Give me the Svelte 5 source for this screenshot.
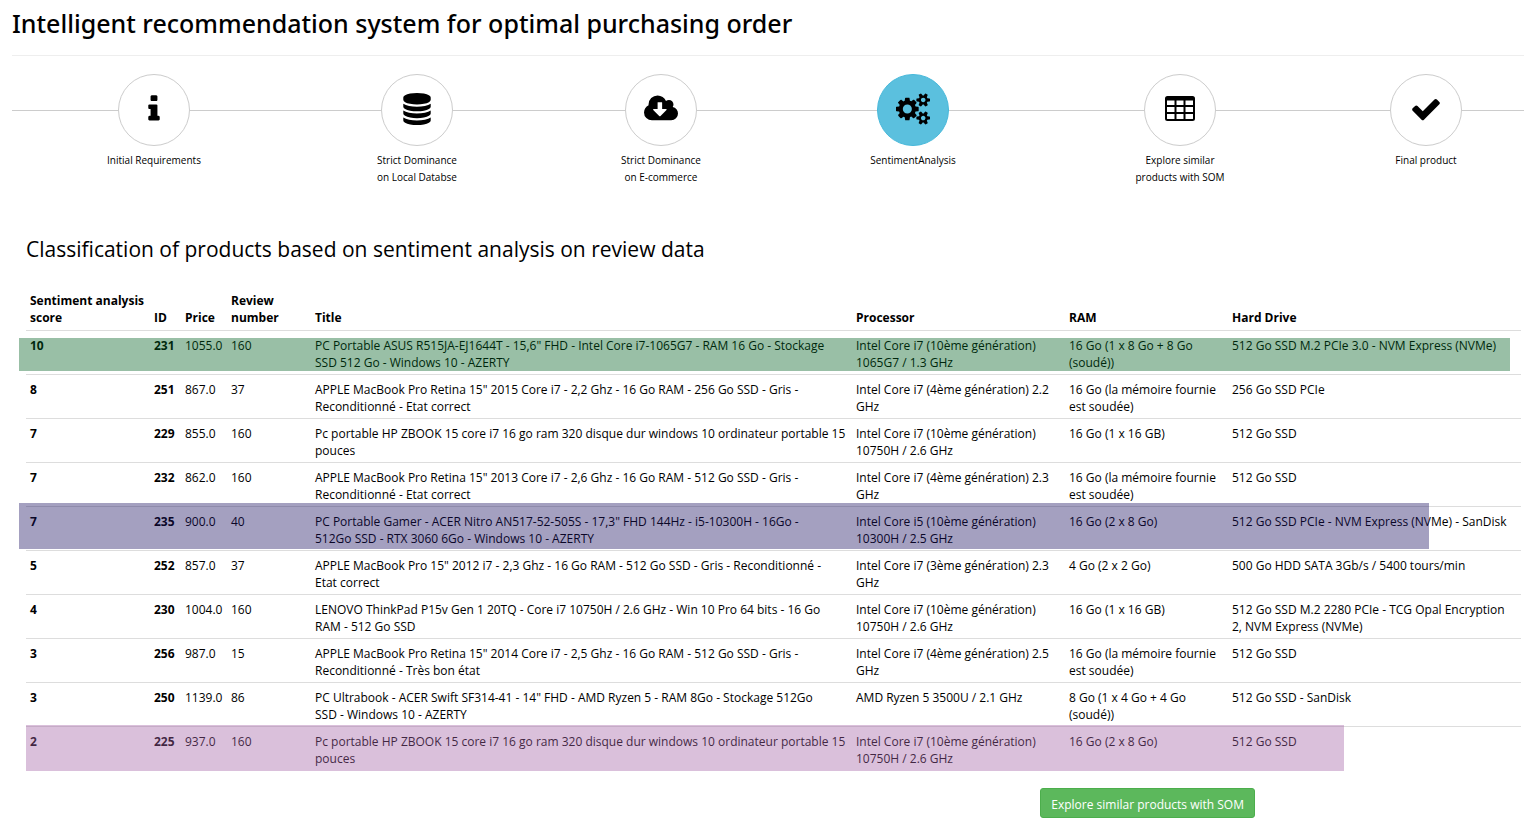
<script>
  const steps = [
    {
      label: 'Initial Requirements',
      box: '0 0 1792 1792',
      width: 32,
      path: 'M1216 1344v128q0 26-19 45t-45 19h-512q-26 0-45-19t-19-45v-128q0-26 19-45t45-19h64v-384h-64q-26 0-45-19t-19-45v-128q0-26 19-45t45-19h384q26 0 45 19t19 45v576h64q26 0 45 19t19 45zm-128-1152v192q0 26-19 45t-45 19h-256q-26 0-45-19t-19-45v-192q0-26 19-45t45-19h256q26 0 45 19t19 45z'
    },
    {
      label: 'Strict Dominance\non Local Databse',
      box: '0 0 1792 1792',
      width: 32,
      path: 'M896 768q237 0 443-43t325-127v170q0 69-103 128t-280 93.5-385 34.5-385-34.5-280-93.5-103-128v-170q119 84 325 127t443 43zm0 768q237 0 443-43t325-127v170q0 69-103 128t-280 93.5-385 34.5-385-34.5-280-93.5-103-128v-170q119 84 325 127t443 43zm0-384q237 0 443-43t325-127v170q0 69-103 128t-280 93.5-385 34.5-385-34.5-280-93.5-103-128v-170q119 84 325 127t443 43zm0-1152q208 0 385 34.5t280 93.5 103 128v128q0 69-103 128t-280 93.5-385 34.5-385-34.5-280-93.5-103-128v-128q0-69 103-128t280-93.5 385-34.5z'
    },
    {
      label: 'Strict Dominance\non E-commerce',
      box: '64 0 1920 1792',
      width: 34,
      path: 'M1344 928q0-14-9-23t-23-9h-224v-352q0-13-9.5-22.5t-22.5-9.5h-192q-13 0-22.5 9.5t-9.5 22.5v352h-224q-13 0-22.5 9.5t-9.5 22.5q0 14 9 23l352 352q9 9 23 9t23-9l351-351q10-12 10-24zm640 224q0 159-112.5 271.5t-271.5 112.5h-1088q-185 0-316.5-131.5t-131.5-316.5q0-130 70-240t188-165q-2-30-2-43 0-212 150-362t362-150q156 0 285.5 87t188.5 231q71-62 166-62 106 0 181 75t75 181q0 76-41 138 130 31 213.5 135.5t83.5 238.5z'
    },
    {
      label: 'SentimentAnalysis',
      active: true,
      box: '0 0 1920 1792',
      width: 34,
      path: 'M896 896q0-106-75-181t-181-75-181 75-75 181 75 181 181 75 181-75 75-181zm768 512q0-52-38-90t-90-38-90 38-38 90q0 53 37.5 90.5t90.5 37.5 90.5-37.5 37.5-90.5zm0-1024q0-52-38-90t-90-38-90 38-38 90q0 53 37.5 90.5t90.5 37.5 90.5-37.5 37.5-90.5zm-384 421v185q0 10-7 19.5t-16 10.5l-155 24q-11 35-32 76 34 48 90 115 7 11 7 20 0 12-7 19-23 30-82.5 89.5t-78.5 59.5q-11 0-21-7l-115-90q-37 19-77 31-11 108-23 155-7 24-30 24h-186q-11 0-20-7.5t-10-17.5l-23-153q-34-10-75-31l-118 89q-7 7-20 7-11 0-21-8-144-133-144-160 0-9 7-19 10-14 41-53t47-61q-23-44-35-82l-152-24q-10-1-17-9.5t-7-19.5v-185q0-10 7-19.5t16-10.5l155-24q11-35 32-76-34-48-90-115-7-11-7-20 0-12 7-20 22-30 82-89t79-59q11 0 21 7l115 90q34-18 77-32 11-108 23-154 7-24 30-24h186q11 0 20 7.5t10 17.5l23 153q34 10 75 31l118-89q8-7 20-7 11 0 21 8 144 133 144 160 0 8-7 19-12 16-42 54t-45 60q23 48 34 82l152 23q10 2 17 10.5t7 19.5zm640 533v140q0 16-149 31-12 27-30 52 51 113 51 138 0 4-4 7-122 71-124 71-8 0-46-47t-52-68q-20 2-30 2t-30-2q-14 21-52 68t-46 47q-2 0-124-71-4-3-4-7 0-25 51-138-18-25-30-52-149-15-149-31v-140q0-16 149-31 13-29 30-52-51-113-51-138 0-4 4-7 4-2 35-20t59-34 30-16q8 0 46 46.5t52 67.5q20-2 30-2t30 2q51-71 92-112l6-2q4 0 124 70 4 3 4 7 0 25-51 138 17 23 30 52 149 15 149 31zm0-1024v140q0 16-149 31-12 27-30 52 51 113 51 138 0 4-4 7-122 71-124 71-8 0-46-47t-52-68q-20 2-30 2t-30-2q-14 21-52 68t-46 47q-2 0-124-71-4-3-4-7 0-25 51-138-18-25-30-52-149-15-149-31v-140q0-16 149-31 13-29 30-52-51-113-51-138 0-4 4-7 4-2 35-20t59-34 30-16q8 0 46 46.5t52 67.5q20-2 30-2t30 2q51-71 92-112l6-2q4 0 124 70 4 3 4 7 0 25-51 138 17 23 30 52 149 15 149 31z'
    },
    {
      label: 'Explore similar\nproducts with SOM',
      box: '0 0 32 32',
      width: 32,
      path: 'M3.5 3h25q2.5 0 2.5 2.5v20q0 2.5-2.5 2.5h-25q-2.5 0-2.5-2.5v-20q0-2.5 2.5-2.5zM3 7.5v4.5h7.5v-4.5zM12.5 7.5v4.5h7v-4.5zM21.5 7.5v4.5h7.5v-4.5zM3 14v5h7.5v-5zM12.5 14v5h7v-5zM21.5 14v5h7.5v-5zM3 21v4.5q0 .5.5.5h7v-5zM12.5 21v5h7v-5zM21.5 21v5h7q.5 0 .5-.5v-4.5z'
    },
    {
      label: 'Final product',
      box: '0 0 1792 1792',
      width: 32,
      path: 'M1671 566q0 40-28 68l-724 724-136 136q-28 28-68 28t-68-28l-136-136-362-362q-28-28-28-68t28-68l136-136q28-28 68-28t68 28l294 295 656-657q28-28 68-28t68 28l136 136q28 28 28 68z'
    }
  ];

  const columns = [
    { name: 'Sentiment analysis\nscore', share: 124 },
    { name: 'ID', share: 31 },
    { name: 'Price', share: 46 },
    { name: 'Review\nnumber', share: 84 },
    { name: 'Title', share: 541 },
    { name: 'Processor', share: 213 },
    { name: 'RAM', share: 163 },
    { name: 'Hard Drive', share: 293 }
  ];
  const total = columns.reduce((sum, c) => sum + c.share, 0);

  const products = [
    { score: 10, id: 231, mark: 'green', cells: ['1055.0', '160', 'PC Portable ASUS R515JA-EJ1644T - 15,6" FHD - Intel Core i7-1065G7 - RAM 16 Go - Stockage\nSSD 512 Go - Windows 10 - AZERTY', 'Intel Core i7 (10ème génération)\n1065G7 / 1.3 GHz', '16 Go (1 x 8 Go + 8 Go\n(soudé))', '512 Go SSD M.2 PCIe 3.0 - NVM Express (NVMe)'] },
    { score: 8, id: 251, cells: ['867.0', '37', 'APPLE MacBook Pro Retina 15" 2015 Core i7 - 2,2 Ghz - 16 Go RAM - 256 Go SSD - Gris -\nReconditionné - Etat correct', 'Intel Core i7 (4ème génération) 2.2\nGHz', '16 Go (la mémoire fournie\nest soudée)', '256 Go SSD PCIe'] },
    { score: 7, id: 229, cells: ['855.0', '160', 'Pc portable HP ZBOOK 15 core i7 16 go ram 320 disque dur windows 10 ordinateur portable 15\npouces', 'Intel Core i7 (10ème génération)\n10750H / 2.6 GHz', '16 Go (1 x 16 GB)', '512 Go SSD'] },
    { score: 7, id: 232, cells: ['862.0', '160', 'APPLE MacBook Pro Retina 15" 2013 Core i7 - 2,6 Ghz - 16 Go RAM - 512 Go SSD - Gris -\nReconditionné - Etat correct', 'Intel Core i7 (4ème génération) 2.3\nGHz', '16 Go (la mémoire fournie\nest soudée)', '512 Go SSD'] },
    { score: 7, id: 235, mark: 'purple', cells: ['900.0', '40', 'PC Portable Gamer - ACER Nitro AN517-52-505S - 17,3" FHD 144Hz - i5-10300H - 16Go -\n512Go SSD - RTX 3060 6Go - Windows 10 - AZERTY', 'Intel Core i5 (10ème génération)\n10300H / 2.5 GHz', '16 Go (2 x 8 Go)', '512 Go SSD PCIe - NVM Express (NVMe) - SanDisk'] },
    { score: 5, id: 252, cells: ['857.0', '37', 'APPLE MacBook Pro 15" 2012 i7 - 2,3 Ghz - 16 Go RAM - 512 Go SSD - Gris - Reconditionné -\nEtat correct', 'Intel Core i7 (3ème génération) 2.3\nGHz', '4 Go (2 x 2 Go)', '500 Go HDD SATA 3Gb/s / 5400 tours/min'] },
    { score: 4, id: 230, cells: ['1004.0', '160', 'LENOVO ThinkPad P15v Gen 1 20TQ - Core i7 10750H / 2.6 GHz - Win 10 Pro 64 bits - 16 Go\nRAM - 512 Go SSD', 'Intel Core i7 (10ème génération)\n10750H / 2.6 GHz', '16 Go (1 x 16 GB)', '512 Go SSD M.2 2280 PCIe - TCG Opal Encryption\n2, NVM Express (NVMe)'] },
    { score: 3, id: 256, cells: ['987.0', '15', 'APPLE MacBook Pro Retina 15" 2014 Core i7 - 2,5 Ghz - 16 Go RAM - 512 Go SSD - Gris -\nReconditionné - Très bon état', 'Intel Core i7 (4ème génération) 2.5\nGHz', '16 Go (la mémoire fournie\nest soudée)', '512 Go SSD'] },
    { score: 3, id: 250, cells: ['1139.0', '86', 'PC Ultrabook - ACER Swift SF314-41 - 14" FHD - AMD Ryzen 5 - RAM 8Go - Stockage 512Go\nSSD - Windows 10 - AZERTY', 'AMD Ryzen 5 3500U / 2.1 GHz', '8 Go (1 x 4 Go + 4 Go\n(soudé))', '512 Go SSD - SanDisk'] },
    { score: 2, id: 225, mark: 'pink', cells: ['937.0', '160', 'Pc portable HP ZBOOK 15 core i7 16 go ram 320 disque dur windows 10 ordinateur portable 15\npouces', 'Intel Core i7 (10ème génération)\n10750H / 2.6 GHz', '16 Go (2 x 8 Go)', '512 Go SSD'] }
  ];
</script>

<main>
  <header>
    <h1>Intelligent recommendation system for optimal purchasing order</h1>
  </header>

  <nav class="wizard">
    {#each steps as step, i}
      <div class="step">
        <button class="circle" class:active={step.active} aria-labelledby={`step-${i}`}>
          <svg viewBox={step.box} width={step.width} height="32" aria-hidden="true">
            <path fill-rule="evenodd" d={step.path} />
          </svg>
        </button>
        <p id={`step-${i}`}>{step.label}</p>
      </div>
    {/each}
  </nav>

  <section>
    <h2>Classification of products based on sentiment analysis on review data</h2>
    <table>
      <colgroup>
        {#each columns as column}
          <col style:width={`${(column.share / total) * 100}%`} />
        {/each}
      </colgroup>
      <thead>
        <tr>
          {#each columns as column}
            <th scope="col">{column.name}</th>
          {/each}
        </tr>
      </thead>
      <tbody>
        {#each products as product}
          <tr>
            <th scope="row">
              {product.score}{#if product.mark}<span class={`mark ${product.mark}`}></span>{/if}
            </th>
            <th>{product.id}</th>
            {#each product.cells as cell}
              <td>{cell}</td>
            {/each}
          </tr>
        {/each}
      </tbody>
    </table>
    <div class="actions">
      <button class="explore">Explore similar products with SOM</button>
    </div>
  </section>
</main>

<style>
  :global(body) {
    margin: 0;
    background: #fff;
  }

  main {
    padding-left: 12px;
    color: #000;
    font-family: 'Segoe UI', 'Open Sans', 'Noto Sans', sans-serif;
    font-size: 12px;
    line-height: 17px;
    overflow-x: hidden;
  }

  h1,
  h2,
  p {
    margin: 0;
  }

  header {
    padding: 5px 0 14px;
    border-bottom: 1px solid #eee;
  }

  h1,
  h2 {
    font-weight: 500;
    white-space: nowrap;
  }

  h1 {
    font-family: 'Segoe UI', 'Noto Sans', 'Open Sans', sans-serif;
    font-size: 25px;
    line-height: 36px;
  }

  .wizard {
    position: relative;
    display: grid;
    grid-template-columns: 284fr 242fr 246fr 258fr 276fr 206fr;
    padding-top: 18px;
  }

  .wizard::before {
    content: '';
    position: absolute;
    top: 54px;
    left: 0;
    right: 0;
    border-top: 1px solid #ccc;
  }

  .step {
    position: relative;
    display: flex;
    flex-direction: column;
    align-items: center;
    gap: 6px;
  }

  .step:last-child {
    padding-left: 10px;
  }

  .step p {
    font-size: 10px;
    text-align: center;
    white-space: pre-line;
  }

  .circle {
    display: flex;
    align-items: center;
    justify-content: center;
    box-sizing: border-box;
    width: 72px;
    height: 72px;
    padding: 0 0 2px;
    border: 1px solid #ccc;
    border-radius: 50%;
    background: #fff;
    color: #000;
  }

  .circle.active {
    border-color: #46b8da;
    background: #5bc0de;
  }

  svg {
    fill: currentColor;
  }

  section {
    padding: 47px 3px 14px 14px;
  }

  h2 {
    font-size: 21px;
    line-height: 32px;
  }

  table {
    width: 100%;
    margin-top: 21px;
    border-collapse: separate;
    border-spacing: 0;
    table-layout: fixed;
  }

  th,
  td {
    padding: 6px 0 3px 4px;
    text-align: left;
    vertical-align: top;
    white-space: pre;
  }

  tbody th {
    white-space: nowrap;
  }

  thead th {
    padding-bottom: 4px;
    vertical-align: bottom;
  }

  th {
    font-weight: 700;
  }

  tbody th,
  tbody td {
    border-top: 1px solid #ddd;
  }

  tbody tr {
    position: relative;
  }

  .mark {
    position: absolute;
    pointer-events: none;
  }

  .green {
    inset: 8px 11px 3px -7px;
    background: rgba(0, 95, 32, 0.4);
  }

  .purple {
    inset: -3px 92px 1px -7px;
    background: rgba(27, 17, 97, 0.4);
  }

  .pink {
    inset: -1px 177px -1px 0;
    background: rgba(162, 97, 165, 0.4);
  }

  .actions {
    display: flex;
    justify-content: flex-end;
    padding: 18px 266px 0 0;
  }

  .explore {
    padding: 8px 10px 4px;
    border: 1px solid #4cae4c;
    border-radius: 3px;
    background: #5cb85c;
    color: #fff;
    font-family: inherit;
    font-size: 12px;
    line-height: 16px;
  }
</style>
